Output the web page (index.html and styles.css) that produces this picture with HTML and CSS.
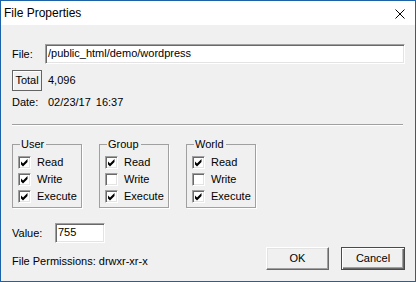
FILE: index.html
```html
<!DOCTYPE html>
<html lang="en">
<head>
    <meta charset="UTF-8">
    <title>File Properties</title>
    <link rel="stylesheet" href="styles.css">
</head>
<body>
<div class="window">
    <div class="titlebar">
        <span class="title">File Properties</span>
        <svg class="close" width="10" height="10" viewBox="0 0 10 10">
            <path d="M0.5 0.5 L9.5 9.5 M9.5 0.5 L0.5 9.5" stroke="#000" stroke-width="1" fill="none"/>
        </svg>
    </div>
    <div class="content">
        <div class="row file-row">
            <span class="lbl lbl-file">File:</span>
            <div class="field file-field">/public_html/demo/wordpress</div>
        </div>
        <div class="row total-row">
            <div class="total">Total</div>
            <span class="num">4,096</span>
        </div>
        <div class="row date-row">
            <span class="lbl lbl-date">Date:</span>
            <span>02/23/17</span>
            <span class="time">16:37</span>
        </div>
        <div class="sep"></div>

        <div class="groups">
            <fieldset class="group">
                <legend>User</legend>
                <div class="check"><span class="box"><svg class="tick" viewBox="1 1 11 11"><path d="M3 5.5 L5 7.5 L9.5 3 V6 L5 10.5 L3 8.5 Z"/></svg></span>Read</div>
                <div class="check"><span class="box"><svg class="tick" viewBox="1 1 11 11"><path d="M3 5.5 L5 7.5 L9.5 3 V6 L5 10.5 L3 8.5 Z"/></svg></span>Write</div>
                <div class="check"><span class="box"><svg class="tick" viewBox="1 1 11 11"><path d="M3 5.5 L5 7.5 L9.5 3 V6 L5 10.5 L3 8.5 Z"/></svg></span>Execute</div>
            </fieldset>
            <fieldset class="group">
                <legend>Group</legend>
                <div class="check"><span class="box"><svg class="tick" viewBox="1 1 11 11"><path d="M3 5.5 L5 7.5 L9.5 3 V6 L5 10.5 L3 8.5 Z"/></svg></span>Read</div>
                <div class="check"><span class="box"></span>Write</div>
                <div class="check"><span class="box"><svg class="tick" viewBox="1 1 11 11"><path d="M3 5.5 L5 7.5 L9.5 3 V6 L5 10.5 L3 8.5 Z"/></svg></span>Execute</div>
            </fieldset>
            <fieldset class="group">
                <legend>World</legend>
                <div class="check"><span class="box"><svg class="tick" viewBox="1 1 11 11"><path d="M3 5.5 L5 7.5 L9.5 3 V6 L5 10.5 L3 8.5 Z"/></svg></span>Read</div>
                <div class="check"><span class="box"></span>Write</div>
                <div class="check"><span class="box"><svg class="tick" viewBox="1 1 11 11"><path d="M3 5.5 L5 7.5 L9.5 3 V6 L5 10.5 L3 8.5 Z"/></svg></span>Execute</div>
            </fieldset>
        </div>

        <div class="bottom">
            <div class="left">
                <div class="row">
                    <span class="lbl lbl-value">Value:</span>
                    <div class="field value-field">755</div>
                </div>
                <div class="perms">File Permissions: <span class="perm-val">drwxr-xr-x</span></div>
            </div>
            <div class="buttons">
                <div class="btn">OK</div>
                <div class="btn btn-default">Cancel</div>
            </div>
        </div>
    </div>
</div>
</body>
</html>
```

FILE: styles.css
```css
* {
    margin: 0;
    padding: 0;
    box-sizing: border-box;
}

body {
    background-color: #f0f0f0;
}

.window {
    display: flex;
    flex-direction: column;
    width: 416px;
    height: 282px;
    border: 1px solid #1c62a8;
    background-color: #f0f0f0;
    color: #000;
    font-family: "Liberation Sans", Arial, sans-serif;
}

.titlebar {
    display: flex;
    align-items: center;
    justify-content: space-between;
    height: 24px;
    padding: 0 10px 0 3px;
    background-color: #fff;
    font-size: 12px;
}

.close {
    display: block;
    margin-top: 2px;
}

.content {
    padding: 19px 10px 0 11px;
    font-size: 11px;
    line-height: 13px;
}

.row {
    display: flex;
    align-items: center;
}

.lbl-file {
    width: 33px;
}

.field {
    height: 20px;
    padding: 0 1px 0 2px;
    border: 1px solid;
    border-color: #a0a0a0 #fff #fff #a0a0a0;
    box-shadow: inset 1px 1px #696969, inset -1px -1px #e3e3e3;
    background-color: #fff;
    line-height: 17px;
}

.file-field {
    flex: 1;
}

.total-row {
    margin-top: 6px;
}

.total {
    width: 30px;
    height: 21px;
    border: 1px solid #646464;
    box-shadow: inset 1px 1px #fff;
    text-align: center;
    line-height: 19px;
}

.num {
    margin-left: 6px;
}

.date-row {
    margin-top: 5px;
}

.lbl-date {
    width: 36px;
}

.time {
    margin-left: 5px;
}

.sep {
    margin: 15px 2px 0 0;
    border-top: 1px solid #a0a0a0;
    border-bottom: 1px solid #fff;
}

.groups {
    display: flex;
    gap: 17px;
    margin-top: 12px;
}

.group {
    width: 70px;
    padding: 3px 0 2px 5px;
    border: 1px solid #a0a0a0;
    box-shadow: 1px 1px #fff;
}

.group legend {
    margin-left: 2px;
    padding: 0 2px 0 1px;
    line-height: 13px;
}

.check {
    display: flex;
    align-items: center;
    height: 17px;
}

.box {
    display: flex;
    width: 13px;
    height: 13px;
    margin-right: 6px;
    border: 1px solid;
    border-color: #a0a0a0 #fff #fff #a0a0a0;
    box-shadow: inset 1px 1px #696969, inset -1px -1px #e3e3e3;
    background-color: #fff;
}

.tick {
    display: block;
    width: 11px;
    height: 11px;
    fill: #000;
}

.bottom {
    display: flex;
    justify-content: space-between;
    margin-top: 15px;
}

.lbl-value {
    width: 43px;
}

.value-field {
    width: 50px;
}

.perms {
    margin-top: 12px;
}

.buttons {
    display: flex;
    gap: 12px;
    margin-top: 24px;
}

.btn {
    width: 63px;
    height: 23px;
    border: 1px solid;
    border-color: #fff #696969 #696969 #fff;
    box-shadow: inset -1px -1px #a0a0a0, inset 1px 1px #e3e3e3;
    background-color: #f0f0f0;
    text-align: center;
    line-height: 21px;
}

.btn-default {
    width: 64px;
    border: 1px solid #4a4a4a;
    box-shadow: inset 1px 1px #fff, inset -1px -1px #696969, inset -2px -2px #a0a0a0;
}
```
